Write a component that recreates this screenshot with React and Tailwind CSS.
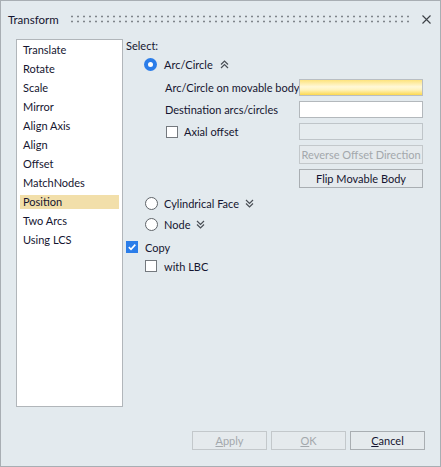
import React from "react";

const modes = [
  "Translate",
  "Rotate",
  "Scale",
  "Mirror",
  "Align Axis",
  "Align",
  "Offset",
  "MatchNodes",
  "Position",
  "Two Arcs",
  "Using LCS",
];

const Chevrons = ({ up }) => (
  <svg width="9" height="9" viewBox="0 0 9 9" className="shrink-0">
    <g
      fill="none"
      stroke="#4a4f55"
      strokeWidth="1.2"
      transform={up ? "" : "rotate(180 4.5 4.5)"}
    >
      <polyline points="1,4.5 4.5,1 8,4.5" />
      <polyline points="1,8 4.5,4.5 8,8" />
    </g>
  </svg>
);

const Radio = ({ checked }) =>
  checked ? (
    <span className="w-[13px] h-[13px] rounded-full bg-[#2b7de9] flex items-center justify-center shrink-0">
      <span className="w-[5px] h-[5px] rounded-full bg-white" />
    </span>
  ) : (
    <span className="w-[13px] h-[13px] rounded-full bg-white border border-[#5f6469] shrink-0" />
  );

const Check = ({ checked }) =>
  checked ? (
    <span className="w-[12px] h-[12px] bg-[#2b7de9] flex items-center justify-center shrink-0">
      <svg width="10" height="10" viewBox="0 0 10 10">
        <polyline
          points="1.8,5.2 4,7.3 8.3,2.6"
          fill="none"
          stroke="white"
          strokeWidth="1.6"
        />
      </svg>
    </span>
  ) : (
    <span className="w-[12px] h-[12px] bg-white border border-[#74797e] shrink-0" />
  );

const Button = ({ children, disabled, className = "" }) => (
  <div
    className={`h-[19px] flex items-center justify-center whitespace-nowrap border ${
      disabled
        ? "border-[#c3c8cb] text-[#a3a8ac]"
        : "border-[#a9aeb2] text-[#151530]"
    } bg-[#e5eaed] ${className}`}
  >
    {children}
  </div>
);

export default function App() {
  return (
    <div
      className="w-[441px] h-[467px] border border-[#a8aeb3] bg-[#e3eaee] flex flex-col text-[11px] leading-[15px] text-[#151530] whitespace-nowrap"
      style={{ fontFamily: 'Lato, "Liberation Sans", sans-serif' }}
    >
      {/* title bar with grip dots */}
      <div className="h-[38px] flex items-start pt-[11px]">
        <span className="w-[68px] pl-[7px] text-[11.5px]">Transform</span>
        <div className="flex-1 h-[10px] mt-[2px] bg-[radial-gradient(circle,#7f858a_0.9px,transparent_1.2px)] bg-[length:6px_5px]" />
        <div className="w-[28px] flex justify-center pt-[3px]">
          <svg width="9" height="9" viewBox="0 0 9 9">
            <path d="M0.5 0.5 L8.5 8.5 M8.5 0.5 L0.5 8.5" stroke="#3c4146" strokeWidth="1.1" />
          </svg>
        </div>
      </div>

      <div className="flex pl-[15px]">
        {/* mode list */}
        <div className="w-[107px] h-[368px] shrink-0 bg-white border border-[#b1b6ba]">
          {modes.map((m) => (
            <div key={m} className="h-[19px] flex items-center">
              <span
                className={`mx-[3px] flex-1 h-[14px] flex items-center pl-[3px] ${
                  m === "Position" ? "bg-[#f2dfaa]" : ""
                }`}
              >
                {m}
              </span>
            </div>
          ))}
        </div>

        {/* options */}
        <div className="flex-1 min-w-0 flex flex-col pl-[3px] pr-[17px]">
          <div className="h-[13px] flex items-center">Select:</div>

          <div className="h-[16px] mt-[4px] flex items-center pl-[18px] gap-[7px]">
            <Radio checked />
            <span>Arc/Circle</span>
            <Chevrons up />
          </div>

          <div className="h-[17px] mt-[7px] flex items-center pl-[39px]">
            <span className="flex-1 min-w-0">Arc/Circle on movable body</span>
            <div className="w-[124px] h-[17px] shrink-0 border border-[#b9bec2] bg-[linear-gradient(to_bottom,#fde37c,#fff8d8_45%,#fff3bd_65%,#fcd84e)]" />
          </div>

          <div className="h-[17px] mt-[5px] flex items-center pl-[39px]">
            <span className="flex-1 min-w-0">Destination arcs/circles</span>
            <div className="w-[124px] h-[17px] shrink-0 border border-[#b3b8bc] bg-white" />
          </div>

          <div className="h-[17px] mt-[5px] flex items-center pl-[40px]">
            <Check />
            <span className="flex-1 min-w-0 pl-[6px]">Axial offset</span>
            <div className="w-[124px] h-[17px] shrink-0 border border-[#bfc5c9] bg-[#e6ecef]" />
          </div>

          <div className="mt-[5px] flex justify-end">
            <Button disabled className="w-[124px]">
              Reverse Offset Direction
            </Button>
          </div>
          <div className="mt-[5px] flex justify-end">
            <Button className="w-[124px]">Flip Movable Body</Button>
          </div>

          <div className="h-[16px] mt-[7px] flex items-center pl-[19px] gap-[6px]">
            <Radio />
            <span>Cylindrical Face</span>
            <Chevrons />
          </div>

          <div className="h-[16px] mt-[5px] flex items-center pl-[19px] gap-[6px]">
            <Radio />
            <span>Node</span>
            <Chevrons />
          </div>

          <div className="h-[16px] mt-[7px] flex items-center gap-[7px]">
            <Check checked />
            <span>Copy</span>
          </div>

          <div className="h-[16px] mt-[3px] flex items-center pl-[19px] gap-[7px]">
            <Check />
            <span>with LBC</span>
          </div>
        </div>
      </div>

      {/* dialog buttons */}
      <div className="flex justify-end gap-[4px] mt-[24px] pr-[15px]">
        <Button disabled className="w-[75px]">
          <span>
            <span className="underline">A</span>pply
          </span>
        </Button>
        <Button disabled className="w-[75px]">
          <span>
            <span className="underline">O</span>K
          </span>
        </Button>
        <Button className="w-[75px]">
          <span>
            <span className="underline">C</span>ancel
          </span>
        </Button>
      </div>
    </div>
  );
}
